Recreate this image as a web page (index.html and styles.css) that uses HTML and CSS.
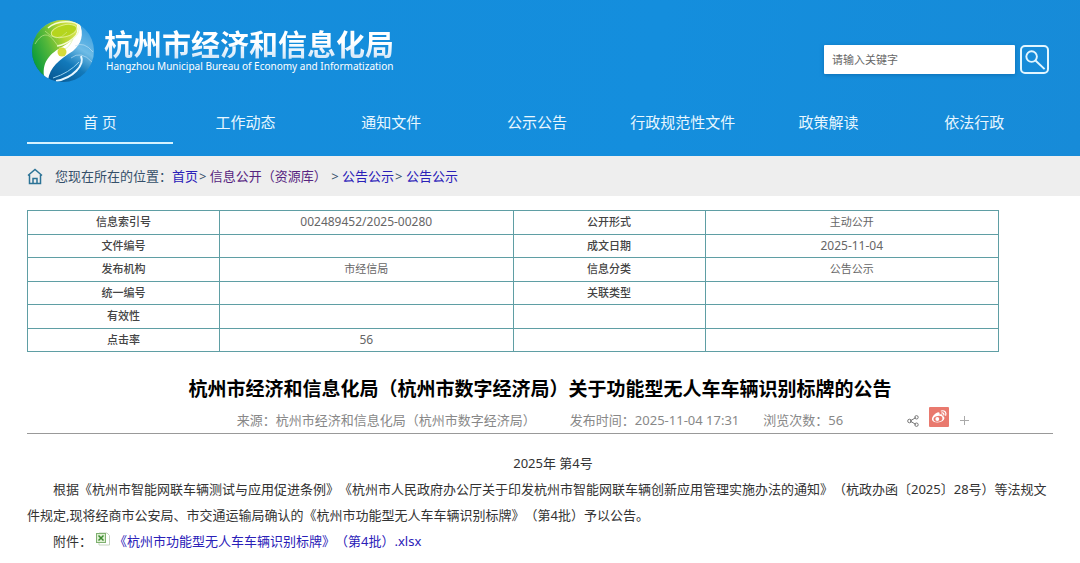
FILE: index.html
```html
<!DOCTYPE html>
<html lang="zh-CN">
<head>
<meta charset="utf-8">
<title>杭州市经济和信息化局</title>
<link rel="stylesheet" href="styles.css">
</head>
<body>
<header class="site-header">
  <div class="brand-row">
    <a class="brand" href="#">
      <svg class="brand-mark" viewBox="0 0 64 64" aria-hidden="true">
        <defs>
          <linearGradient id="leaf" x1="0" y1="0.6" x2="1" y2="0.1">
            <stop offset="0" stop-color="#079a3c"/>
            <stop offset="0.35" stop-color="#56b83a"/>
            <stop offset="0.65" stop-color="#b9d62f"/>
            <stop offset="1" stop-color="#e4ea62"/>
          </linearGradient>
          <linearGradient id="sea" x1="0.9" y1="0" x2="0.3" y2="1">
            <stop offset="0" stop-color="#2793dc"/>
            <stop offset="0.4" stop-color="#6fbce6"/>
            <stop offset="0.65" stop-color="#1279ba"/>
            <stop offset="1" stop-color="#06558f"/>
          </linearGradient>
          <clipPath id="globe"><circle cx="32" cy="32" r="31"/></clipPath>
        </defs>
        <g clip-path="url(#globe)">
          <rect width="64" height="64" fill="url(#sea)"/>
          <path d="M0 0H44C54 8 52 20 38 31C24 39 14 43 14 60L0 64Z" fill="url(#leaf)"/>
          <path d="M48 3C54 16 50 25 42 32C28 41 19 48 17 61L13 57C11 42 20 34 31 28C44 21 49 13 45 3Z" fill="#fff"/>
          <path d="M17 9C26 1 45 1 48 7C50 16 37 25 26 27" fill="none" stroke="#f4fbd2" stroke-width="1.500"/>
          <ellipse cx="33" cy="12" rx="13" ry="6" transform="rotate(-14 33 12)" fill="#b5d51e" stroke="#e0ee88"/>
          <path d="M4 25Q14 8 24 23T42 20M14 12Q26 25 36 13" fill="none" stroke="#d3ed9a" stroke-opacity=".6"/>
          <circle cx="31" cy="33" r="4.500" fill="#d6db3b"/>
          <path d="M50 37C54 46 42 59 25 62" fill="none" stroke="#e7f7ff" stroke-width="2"/>
          <path d="M48 43Q38 54 22 59" fill="none" stroke="#9ad2ee"/>
          <path d="M44 27Q53 22 62 33M40 39Q50 31 61 43" fill="none" stroke="#c4e5f7" stroke-opacity=".6"/>
        </g>
      </svg>
      <span class="brand-text">
        <span class="brand-cn">杭州市经济和信息化局</span>
        <span class="brand-en">Hangzhou Municipal Bureau of Economy and Informatization</span>
      </span>
    </a>
    <form class="search">
      <input class="search-box" type="text" placeholder="请输入关键字" aria-label="请输入关键字">
      <button class="search-button" type="button" aria-label="搜索">
        <svg viewBox="0 0 26 26" aria-hidden="true"><circle cx="10" cy="10" r="5.500"/><path d="M14 14L23.500 23"/></svg>
      </button>
    </form>
  </div>
  <nav class="main-nav">
    <a class="nav-link nav-link-current" href="#">首 页</a>
    <a class="nav-link" href="#">工作动态</a>
    <a class="nav-link" href="#">通知文件</a>
    <a class="nav-link" href="#">公示公告</a>
    <a class="nav-link" href="#">行政规范性文件</a>
    <a class="nav-link" href="#">政策解读</a>
    <a class="nav-link" href="#">依法行政</a>
  </nav>
</header>

<div class="breadcrumb">
  <svg class="home-icon" viewBox="0 0 16 17" aria-hidden="true"><path d="M1 7.500L8 1.500L15 7.500M2.500 7V15.500H13.500V7M6 15V10.500H10V15"/></svg>
  <p class="trail">您现在所在的位置：<a href="#">首页</a>&gt; <a class="seen" href="#">信息公开（资源库）</a> &gt; <a href="#">公告公示</a>&gt; <a href="#">公告公示</a></p>
</div>

<main class="content">
  <table class="info">
    <colgroup><col class="col-label"><col><col class="col-label"><col></colgroup>
    <tbody>
      <tr><th scope="row">信息索引号</th><td class="number">002489452/2025-00280</td><th scope="row">公开形式</th><td>主动公开</td></tr>
      <tr><th scope="row">文件编号</th><td></td><th scope="row">成文日期</th><td class="number">2025-11-04</td></tr>
      <tr><th scope="row">发布机构</th><td>市经信局</td><th scope="row">信息分类</th><td>公告公示</td></tr>
      <tr><th scope="row">统一编号</th><td></td><th scope="row">关联类型</th><td></td></tr>
      <tr><th scope="row">有效性</th><td></td><td></td><td></td></tr>
      <tr><th scope="row">点击率</th><td class="number">56</td><td></td><td></td></tr>
    </tbody>
  </table>

  <article>
    <h1 class="title">杭州市经济和信息化局（杭州市数字经济局）关于功能型无人车车辆识别标牌的公告</h1>
    <div class="meta">
      <p class="facts">
        <span>来源：杭州市经济和信息化局（杭州市数字经济局）</span>
        <span class="published">发布时间：2025-11-04 17:31</span>
        <span>浏览次数：56</span>
      </p>
      <div class="share">
        <a class="share-link" href="#" aria-label="分享"><svg class="share-icon" viewBox="0 0 12 12" aria-hidden="true"><path d="M3 6L9 2.500M3 6L9 9.500"/><circle cx="2.500" cy="6" r="1.800"/><circle cx="9.500" cy="2.300" r="1.700"/><circle cx="9.500" cy="9.700" r="1.700"/></svg></a>
        <a class="share-link" href="#" aria-label="微博"><svg class="weibo-icon" viewBox="0 0 20 20" aria-hidden="true"><rect width="20" height="20" rx="1" fill="#e9796e"/><path d="M8.500 5.500C10 5 11 5.700 10.500 7.500C13 6.600 14 7.500 13.500 9C15.500 9.600 16 11 14.800 12.700C12.500 16 5 16.500 3.200 13.300C2 10.700 5.500 6.500 8.500 5.500Z" fill="#fff"/><ellipse cx="9" cy="11.800" rx="4.500" ry="2.900" transform="rotate(-8 9 11.800)" fill="#e9796e"/><circle cx="8.300" cy="12" r="1.900" fill="#fff"/><path d="M12.300 4C15.500 3 17.700 5.500 16.700 8.300M12.700 6C14.300 5.700 15.200 6.700 14.800 8" fill="none" stroke="#fff" stroke-width="1.200" stroke-linecap="round"/></svg></a>
        <a class="share-link" href="#" aria-label="更多"><svg class="plus-icon" viewBox="0 0 12 12" aria-hidden="true"><path d="M5.500 1V10M1 5.500H10"/></svg></a>
      </div>
    </div>
    <div class="body-text">
      <p class="issue">2025年 第4号</p>
      <p>根据《杭州市智能网联车辆测试与应用促进条例》《杭州市人民政府办公厅关于印发杭州市智能网联车辆创新应用管理实施办法的通知》（杭政办函〔2025〕28号）等法规文件规定,现将经商市公安局、市交通运输局确认的《杭州市功能型无人车车辆识别标牌》（第4批）予以公告。</p>
      <p>附件：<svg class="file-icon" viewBox="0 0 14 14" aria-hidden="true"><path d="M3 1H11L13.500 3.500V13H3Z" fill="#fff" stroke="#c5d3bf"/><rect x="0.500" y="1.500" width="9" height="9" fill="#dff0d3" stroke="#7fb070"/><path d="M2.500 3.500L7.500 8.500M7.500 3.500L2.500 8.500" stroke="#3c8b30" stroke-width="1.500"/></svg><a href="#">《杭州市功能型无人车车辆识别标牌》（第4批）.xlsx</a></p>
    </div>
  </article>
</main>
</body>
</html>
```
FILE: styles.css
```css
* {
  box-sizing: border-box;
}

body {
  margin: 0;
  background: #fff;
  color: #333;
  font: 13px/26px "Noto Sans", "Noto Sans CJK SC", sans-serif;
  text-spacing-trim: space-all;
}

a {
  color: #2a20b8;
  text-decoration: none;
}

p {
  margin: 0;
}

.site-header {
  padding: 18px 2.5% 12px;
  background: linear-gradient(100deg, #168cda, #148edd 60%, #178bd8);
}

.brand-row {
  display: flex;
  justify-content: space-between;
  align-items: flex-start;
}

.brand {
  display: flex;
  gap: 9px;
  padding-left: 4px;
  color: #fff;
}

.brand-mark {
  width: 64px;
  height: 66px;
}

.brand-text {
  display: flex;
  flex-direction: column;
  gap: 2px;
  padding-top: 9px;
}

.brand-cn {
  font-family: "Noto Sans CJK SC", sans-serif;
  font-size: 29px;
  font-weight: 700;
  line-height: 32px;
  background: linear-gradient(#fff 50%, #cfe5f8);
  background-clip: text;
  color: transparent;
}

.brand-en {
  padding-left: 2px;
  font-size: 10px;
  line-height: 10px;
}

.search {
  display: flex;
  gap: 5px;
  margin: 27px 4px 0 0;
}

.search-box {
  width: 191px;
  height: 29px;
  padding: 0 8px;
  border: 0;
  border-radius: 1px;
  background: #fff;
  box-shadow: 0 1px 4px #0b6fb4;
  color: #555;
  font: inherit;
  font-size: 11px;
}

.search-box::placeholder {
  color: #666;
}

.search-button {
  width: 29px;
  height: 29px;
  padding: 0;
  border: 2px solid #e2f6ff;
  border-radius: 5px;
  background: none;
}

.search-button svg {
  display: block;
  fill: none;
  stroke: #e2f6ff;
  stroke-width: 2;
}

.main-nav {
  display: grid;
  grid-template-columns: repeat(7, 1fr);
  margin: 18px 6px 0 0;
}

.nav-link {
  height: 42px;
  border-bottom: 2px solid transparent;
  color: #e8f7ff;
  font-size: 15px;
  line-height: 40px;
  text-align: center;
}

.nav-link-current {
  border-color: #d5f2ff;
}

.breadcrumb {
  display: flex;
  align-items: center;
  gap: 12px;
  padding: 7px 2.5%;
  background: #eee;
  color: #35506a;
}

.home-icon {
  width: 16px;
  height: 17px;
  fill: none;
  stroke: #2c7396;
  stroke-width: 1.5;
}

.trail a {
  margin-right: 1px;
}

.trail .seen {
  color: #562480;
}

.content {
  padding: 14px 2.5%;
}

.info {
  width: 972px;
  max-width: 100%;
  height: 142px;
  border-collapse: collapse;
  table-layout: fixed;
  color: #666;
  font-size: 11px;
  line-height: 16px;
  text-align: center;
}

.col-label {
  width: 192px;
}

.info th,
.info td {
  padding: 0;
  border: 1px solid #5f9ea4;
}

.info th {
  color: #444;
  font-weight: 500;
}

.info .number {
  font-size: 12px;
}

.title {
  margin: 23px 0 0;
  color: #000;
  font-size: 19px;
  font-weight: 700;
  line-height: 28px;
  text-align: center;
}

.meta {
  display: grid;
  grid-template-columns: 1fr auto 1fr;
  height: 31px;
  padding-top: 4px;
  border-bottom: 1px solid #999;
  color: #888;
}

.facts {
  display: flex;
  grid-column: 2;
}

.published {
  margin: 0 24px 0 34px;
}

.share {
  display: flex;
  align-items: flex-end;
  gap: 10px;
  height: 20px;
  padding-left: 64px;
}

.share-link {
  display: flex;
}

.share-icon {
  width: 12px;
  height: 12px;
  fill: none;
  stroke: #777;
}

.weibo-icon {
  width: 20px;
  height: 20px;
}

.plus-icon {
  width: 12px;
  height: 12px;
  stroke: #aaa;
}

.body-text {
  padding-top: 16px;
}

.body-text p {
  text-indent: 26px;
}

.body-text .issue {
  text-align: center;
}

.file-icon {
  width: 14px;
  height: 14px;
  margin: 0 4px;
}
```
